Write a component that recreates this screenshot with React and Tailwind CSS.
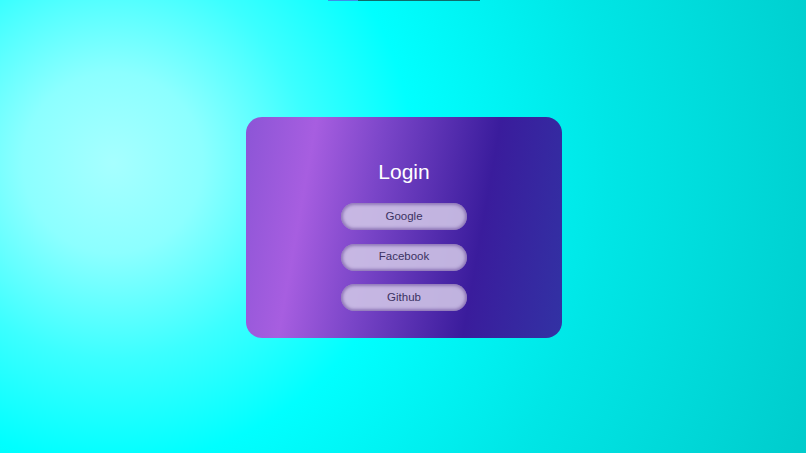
export default function App() {
  const providers = ['Google', 'Facebook', 'Github'];

  return (
    <div
      className="relative h-[453px] w-full overflow-hidden flex items-center justify-center pl-[2px] pt-[2px] bg-[radial-gradient(circle_at_14%_36%,#a6ffff_0%,#8cffff_12%,#3cffff_26%,#00ffff_40%,#00e6e6_66%,#00cccc_100%)]"
      style={{ fontFamily: '"Liberation Sans", Arial, sans-serif' }}
    >
      {/* top strip */}
      <div className="absolute top-0 left-[328px] flex h-[1px]">
        <div className="w-[30px] bg-[#3d8fe6]" />
        <div className="w-[122px] bg-[#0f6b6b]" />
      </div>

      <div className="w-[316px] h-[221px] rounded-[16px] flex flex-col items-center pt-[44px] bg-[linear-gradient(100deg,#8c55d6_0%,#a75ee0_20%,#7a45c8_40%,#3a1c9c_72%,#3232a4_100%)]">
        <h1 className="text-[21px] leading-none text-white mb-[21px]">Login</h1>
        <div className="flex flex-col gap-[13.5px]">
          {providers.map((p) => (
            <button
              key={p}
              className="w-[126px] h-[27px] rounded-full bg-[#cec3e6]/90 text-[11.5px] text-[#3b3262] shadow-[inset_0_0_3px_2px_rgba(100,70,150,0.55)]"
            >
              {p}
            </button>
          ))}
        </div>
      </div>
    </div>
  );
}
